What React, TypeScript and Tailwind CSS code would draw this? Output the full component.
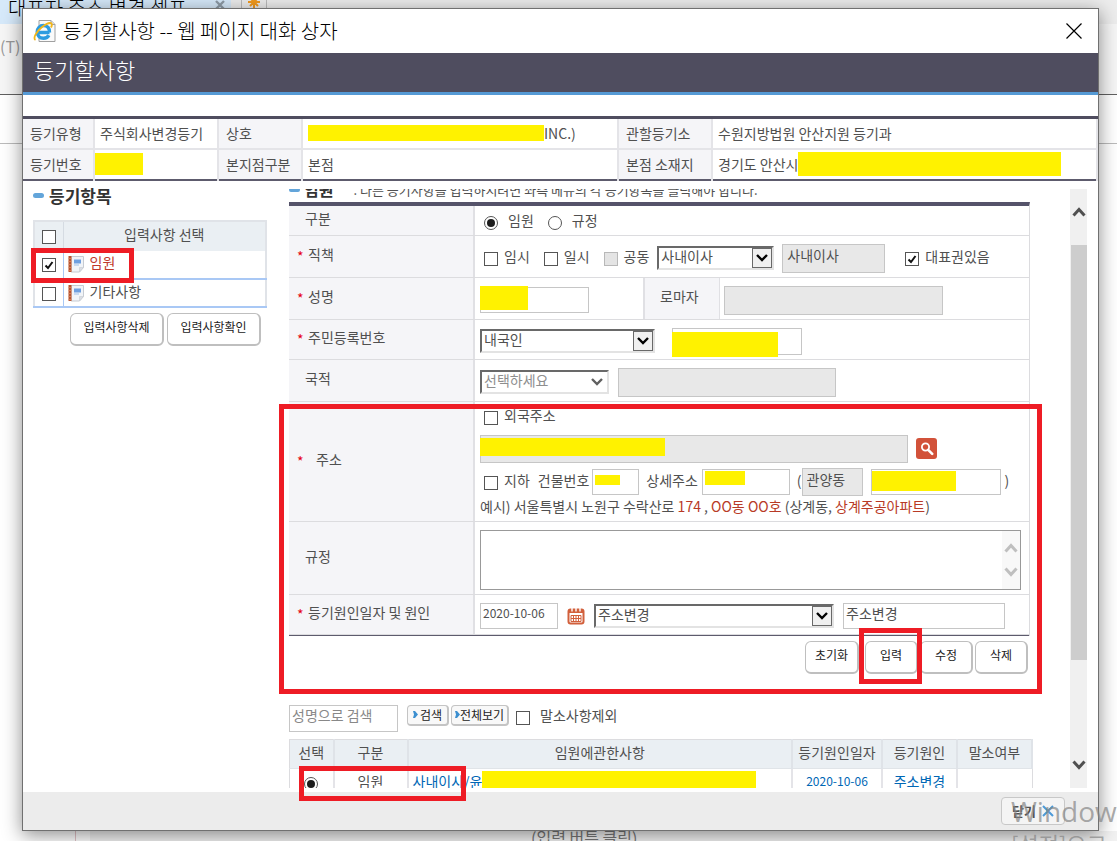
import type { ReactNode } from "react";
import clsx from "clsx";

const Mark = ({ className }: { className: string }) => (
  <span className={clsx("bg-[#fff200]", className)} />
);

const Outline = ({ className }: { className: string }) => (
  <div
    className={clsx(
      "pointer-events-none absolute border-[5px] border-[#ee1c25]",
      className
    )}
  />
);

type CheckProps = {
  id: string;
  label?: string;
  hint?: string;
  checked?: boolean;
  disabled?: boolean;
  className?: string;
};

const Check = ({ id, label, hint, checked, disabled, className }: CheckProps) => (
  <span className={clsx("flex shrink-0 items-center", className)}>
    <span className="relative mt-0.5 flex">
      <input
        id={id}
        type="checkbox"
        aria-label={label ? undefined : hint}
        defaultChecked={checked}
        disabled={disabled}
        className="peer size-3.5 appearance-none border border-[#555] bg-white disabled:border-[#b8b8b8] disabled:bg-[#e4e4e4]"
      />
      <svg
        viewBox="0 0 14 14"
        className="pointer-events-none absolute inset-0 hidden size-3.5 peer-checked:block"
      >
        <path d="M3.500 7.500 6 10l4.500-6" fill="none" stroke="#111" strokeWidth="2" />
      </svg>
    </span>
    {label && (
      <label htmlFor={id} className="ml-1.5 pb-1">
        {label}
      </label>
    )}
  </span>
);

type RadioProps = {
  id: string;
  name: string;
  label?: string;
  hint?: string;
  checked?: boolean;
  className?: string;
};

const Radio = ({ id, name, label, hint, checked, className }: RadioProps) => (
  <span className={clsx("flex items-center", className)}>
    <span className="relative mt-0.5 flex">
      <input
        id={id}
        type="radio"
        name={name}
        aria-label={label ? undefined : hint}
        defaultChecked={checked}
        className="peer size-3.5 appearance-none rounded-full border border-[#555] bg-white"
      />
      <span className="pointer-events-none absolute inset-[3px] hidden rounded-full bg-[#1c1c1c] peer-checked:block" />
    </span>
    {label && (
      <label htmlFor={id} className="ml-2.5 pb-1">
        {label}
      </label>
    )}
  </span>
);

type SelectProps = {
  id: string;
  value: string;
  label?: string;
  disabled?: boolean;
  className?: string;
};

const Select = ({ id, value, label, disabled, className }: SelectProps) => (
  <span className={clsx("relative flex h-6 shrink-0", className)}>
    <select
      id={id}
      aria-label={label}
      disabled={disabled}
      className="w-full appearance-none border-2 border-t-[#696969] border-r-[#e3e3e3] border-b-[#e3e3e3] border-l-[#696969] bg-white pb-1 pl-0.5 leading-4 disabled:text-[#8e8e8e] disabled:opacity-100"
    >
      <option>{value}</option>
    </select>
    <span
      className={clsx(
        "pointer-events-none absolute top-0.5 right-0.5 flex size-5 items-center justify-center",
        !disabled && "border border-[#696969] bg-[#f0f0f0]"
      )}
    >
      <svg viewBox="0 0 12 8" className="h-2 w-3">
        <path
          d="m1 1 5 5 5-5"
          fill="none"
          stroke={disabled ? "#606060" : "#000"}
          strokeWidth="2.400"
        />
      </svg>
    </span>
  </span>
);

type TextProps = {
  id: string;
  value?: string;
  label?: string;
  placeholder?: string;
  readOnly?: boolean;
  className?: string;
  children?: ReactNode;
};

const Text = ({
  id,
  value,
  label,
  placeholder,
  readOnly,
  className,
  children,
}: TextProps) => (
  <span className={clsx("relative flex shrink-0", className)}>
    <input
      id={id}
      type="text"
      aria-label={label}
      defaultValue={value}
      placeholder={placeholder}
      readOnly={readOnly}
      className="w-full border border-[#c6c6c6] bg-white px-0.5 pb-1.5 placeholder:text-[#888] read-only:bg-[#e8e8e8] read-only:px-1"
    />
    {children}
  </span>
);

const Button = ({ children, className }: { children: ReactNode; className: string }) => (
  <button
    type="button"
    className={clsx(
      "h-[33px] shrink-0 rounded-md border border-r-2 border-b-2 border-[#bfbfbf] bg-white pb-1 text-xs text-[#222]",
      className
    )}
  >
    {children}
  </button>
);

type RowProps = {
  label: string;
  htmlFor?: string;
  required?: boolean;
  height: string;
  labelClass?: string;
  children: ReactNode;
};

const Row = ({ label, htmlFor, required, height, labelClass, children }: RowProps) => (
  <div className={clsx("flex border-b border-[#dcdcdf]", height)}>
    <div className="flex w-[186px] shrink-0 items-center border-r-2 border-[#e0e0e4] bg-[#f5f5f8] pb-1 pl-2">
      <span
        className={clsx(
          "shrink-0 pt-1 text-[#e60012]",
          required ? "w-[11px]" : "w-2"
        )}
      >
        {required && "*"}
      </span>
      <label htmlFor={htmlFor} className={labelClass}>
        {label}
      </label>
    </div>
    <div className="flex min-w-0 flex-1 items-center pt-1 pl-[5px]">{children}</div>
  </div>
);

const BookIcon = () => (
  <svg viewBox="0 0 16 18" className="h-[18px] w-4 shrink-0">
    <path d="M3 1.500h12.500v11l-4 4.500H3z" fill="#f1f4f8" stroke="#c6cbd2" />
    <path d="M11.500 17v-4.500h4z" fill="#d9dde3" stroke="#c6cbd2" strokeWidth=".6" />
    <path d="M6 4.500h7v4H6z" fill="#6fa0e0" />
    <path d="M6 10h5" stroke="#9fc0ea" />
    <path d="M.5 1h3v16h-3z" fill="#b8532f" />
    <path d="M.5 3.500h3M.5 6.500h3M.5 9.500h3M.5 12.500h3M.5 15.500h3" stroke="#d98a62" strokeWidth=".8" />
  </svg>
);

const ExplorerIcon = () => (
  <svg viewBox="0 0 24 24" className="size-6 shrink-0">
    <path d="M6 1.500h12l4 4v17H6z" fill="#fafafa" stroke="#a0a0a0" />
    <path d="M18 1.500v4h4" fill="#ddd" stroke="#a0a0a0" />
    <path
      d="M16.500 13.500H6M16.500 13.500c.2-4.200-2-7-6-7-3.700 0-6.300 2.800-6.300 6.500s2.600 6.300 6.300 6.300c2.500 0 4.400-1 5.300-3"
      fill="none"
      stroke="#2d9be0"
      strokeWidth="3.400"
    />
    <path
      d="M2.500 21c-3-1.500 1-8.500 6-12.500 4-3.400 8.500-5.500 10-4 .8.900.3 2.500-.5 4"
      fill="none"
      stroke="#f2b619"
      strokeWidth="1.800"
    />
  </svg>
);

const Arrow = ({ up, color }: { up?: boolean; color: string }) => (
  <svg viewBox="0 0 14 10" className="h-2.5 w-3.5">
    <path
      d={up ? "m1.500 8.500 5.500-6 5.500 6" : "m1.500 1.500 5.500 6 5.500-6"}
      fill="none"
      stroke={color}
      strokeWidth="3"
    />
  </svg>
);

const BlueDot = () => (
  <svg viewBox="0 0 5 7" className="h-[7px] w-[5px] shrink-0">
    <path d="M0 0h2l3 3.500L2 7H0l1-3.500z" fill="#3c8fd0" />
  </svg>
);

const Backdrop = () => (
  <div className="absolute inset-0 -z-10 bg-white" aria-hidden="true">
    <div className="flex h-6 bg-[#ededed]">
      <div className="flex w-[231px] items-start justify-between overflow-hidden bg-[#d6e9fa] pr-1.5 pl-2 text-xl leading-4 font-light whitespace-nowrap text-black">
        대표자 주소 변경 셀프
        <svg viewBox="0 0 10 10" className="size-2.5">
          <path d="m1 1 8 8m0-8L1 9" stroke="#8d9aa6" strokeWidth="2.400" />
        </svg>
      </div>
      <div className="ml-2.5 flex w-[26px] justify-center border-x border-[#bbb]">
        <svg viewBox="0 0 12 12" className="-mt-1 size-3">
          <path
            d="M6 0v12M0 6h12M2 2l8 8M10 2l-8 8"
            stroke="#f39a1d"
            strokeWidth="2"
          />
        </svg>
      </div>
    </div>
    <div className="h-[71px] border-b border-[#606060] bg-[#f6f6f6] pt-2.5 text-base text-[#999]">
      (T)
    </div>
    <div className="h-[49px] border-b border-[#bbb]" />
    <div className="absolute bottom-0 left-[75px] h-2.5 w-4 border-x border-[#e3c4c8]" />
    <div className="absolute right-0 bottom-0 left-[90px] h-2.5 overflow-hidden bg-[#f2f2f2] pl-[441px] text-base leading-3 text-[#777]">
      (입력 버튼 클릭)
    </div>
  </div>
);

const infoLabel = "border-r-2 border-[#e4e4e8] bg-[#f5f5f8] pl-[7px] text-left font-normal";
const infoValue = "border-r-2 border-[#e4e4e8] pl-[5px]";

const InfoTable = () => (
  <table className="w-full table-fixed border-collapse border-t-[3px] border-b-2 border-t-[#4f4d5f] border-b-[#5d5b6d]">
    <colgroup>
      <col className="w-[71px]" />
      <col className="w-[124px]" />
      <col className="w-[84px]" />
      <col className="w-[316px]" />
      <col className="w-[94px]" />
      <col />
    </colgroup>
    <tbody>
      <tr className="h-[31px] border-b-2 border-[#e4e4e8]">
        <th className={infoLabel}>등기유형</th>
        <td className={infoValue}>주식회사변경등기</td>
        <th className={infoLabel}>상호</th>
        <td className={infoValue}>
          <span className="flex items-center">
            <Mark className="h-4 w-[236px]" />
            INC.)
          </span>
        </td>
        <th className={infoLabel}>관할등기소</th>
        <td className={infoValue}>수원지방법원 안산지원 등기과</td>
      </tr>
      <tr className="h-[31px]">
        <th className={infoLabel}>등기번호</th>
        <td className="border-r-2 border-[#e4e4e8]">
          <Mark className="block h-[22px] w-12" />
        </td>
        <th className={infoLabel}>본지점구분</th>
        <td className={infoValue}>본점</td>
        <th className={infoLabel}>본점 소재지</th>
        <td className={infoValue}>
          <span className="flex items-center">
            경기도 안산시
            <Mark className="h-6 w-[263px]" />
          </span>
        </td>
      </tr>
    </tbody>
  </table>
);

const items = [
  { id: "item-officer", name: "임원", checked: true },
  { id: "item-etc", name: "기타사항", checked: false },
];

const SideList = () => (
  <aside className="w-[266px] shrink-0 pt-[5px] pl-2.5">
    <h2 className="flex items-center gap-[5px] text-[17px] leading-5 font-bold text-[#333]">
      <span className="h-[5px] w-[11px] rounded-sm bg-[#63a5da]" />
      등기항목
    </h2>
    <table className="mt-3.5 w-[234px] border-collapse border-2 border-[#e0e3e8]">
      <thead>
        <tr className="h-[30px] bg-[#eaeff3]">
          <th className="w-[29px] border-r border-[#d5dbe2] pl-[7px]">
            <Check id="item-all" hint="전체 선택" />
          </th>
          <th className="pb-1 font-normal">입력사항 선택</th>
        </tr>
      </thead>
      <tbody>
        {items.map((item) => (
          <tr key={item.id} className="h-7">
            <td className="border-r border-b-2 border-[#a9c8f5] pl-[7px]">
              <Check id={item.id} hint={item.name} checked={item.checked} />
            </td>
            <td className="border-b-2 border-[#a9c8f5]">
              <label
                htmlFor={item.id}
                className={clsx(
                  "flex items-center gap-1.5 pl-1",
                  item.checked && "text-[#c0392b]"
                )}
              >
                <BookIcon />
                <span className="pb-1">{item.name}</span>
              </label>
            </td>
          </tr>
        ))}
      </tbody>
    </table>
    <div className="mt-[5px] flex gap-[3px] pl-[37px]">
      <Button className="w-[94px]">입력사항삭제</Button>
      <Button className="w-[94px]">입력사항확인</Button>
    </div>
  </aside>
);

const OfficerForm = () => (
  <form className="mr-[3px]">
    <div className="border-t-4 border-r border-t-[#55536a] border-r-[#dcdcdf]">
      <Row label="구분" height="h-[30px]">
        <Radio id="kind-officer" name="kind" label="임원" checked className="ml-1" />
        <Radio id="kind-rule" name="kind" label="규정" className="ml-3.5" />
      </Row>
      <Row label="직책" htmlFor="position" required height="h-[42px]">
        <Check id="temporary" label="임시" className="ml-1" />
        <Check id="oneday" label="일시" className="ml-3.5" />
        <Check id="joint" label="공동" disabled className="ml-3.5" />
        <Select id="position" value="사내이사" className="ml-2 w-[117px]" />
        <Text
          id="position-name"
          label="직책명"
          value="사내이사"
          readOnly
          className="ml-2 h-[29px] w-[103px]"
        />
        <Check id="represent" label="대표권있음" checked className="ml-5" />
      </Row>
      <Row label="성명" htmlFor="name" required height="h-[42px]">
        <Text id="name" className="h-[26px] w-[109px]">
          <Mark className="absolute -top-px left-0 h-6 w-12" />
        </Text>
        <label
          htmlFor="roman"
          className="-mt-1 ml-[54px] flex h-[41px] w-[77px] items-center border-r border-l-2 border-[#e0e0e4] bg-[#f5f5f8] pb-1 pl-[15px]"
        >
          로마자
        </label>
        <Text id="roman" readOnly className="ml-1 h-[29px] w-[219px]" />
      </Row>
      <Row label="주민등록번호" htmlFor="nation-type" required height="h-10">
        <Select id="nation-type" value="내국인" className="w-[175px]" />
        <Text id="regno" label="주민등록번호" className="ml-[17px] h-[27px] w-[130px]">
          <Mark className="absolute top-1 left-0 h-[25px] w-[106px]" />
        </Text>
      </Row>
      <Row label="국적" htmlFor="nation" height="h-[42px]">
        <Select id="nation" value="선택하세요" disabled className="w-[129px]" />
        <Text
          id="nation-name"
          label="국적명"
          readOnly
          className="ml-[9px] h-[29px] w-[218px]"
        />
      </Row>
      <Row
        label="주소"
        htmlFor="address"
        required
        height="h-[120px]"
        labelClass="pl-2"
      >
        <div className="flex min-w-0 flex-1 flex-col pb-1.5">
          <Check id="foreign" label="외국주소" className="ml-1 h-6" />
          <div className="mt-1.5 flex items-center">
            <Text id="address" readOnly className="mr-2 h-7 w-[428px]">
              <Mark className="absolute top-[3px] left-0 h-[18px] w-[185px]" />
            </Text>
            <button
              type="button"
              aria-label="주소 검색"
              className="flex size-[21px] items-center justify-center rounded-[3px] bg-[#d2523a]"
            >
              <svg viewBox="0 0 14 14" className="size-3.5">
                <circle cx="5.500" cy="5" r="3.600" fill="none" stroke="#fff" strokeWidth="1.800" />
                <path d="m8.200 7.800 4 4" stroke="#fff" strokeWidth="2.600" strokeLinecap="round" />
              </svg>
            </button>
          </div>
          <div className="mt-[5px] flex h-7 items-center whitespace-nowrap">
            <Check id="basement" label="지하" className="ml-1" />
            <label htmlFor="building" className="ml-2 pb-1">
              건물번호
            </label>
            <Text id="building" className="ml-[3px] h-[26px] w-[47px]">
              <Mark className="absolute top-1.5 left-[3px] h-2.5 w-[25px]" />
            </Text>
            <label htmlFor="detail" className="ml-[7px] pb-1">
              상세주소
            </label>
            <Text id="detail" className="ml-1 h-[26px] w-[88px]">
              <Mark className="absolute top-0.5 left-[3px] h-3.5 w-10" />
            </Text>
            <span className="ml-[7px] pb-1">(</span>
            <Text
              id="dong"
              label="동"
              value="관양동"
              readOnly
              className="h-7 w-[61px]"
            />
            <Text id="complex" label="공동주택명" className="ml-2 h-[26px] w-[130px]">
              <Mark className="absolute top-0.5 left-px h-5 w-[84px]" />
            </Text>
            <span className="ml-1 pb-1">)</span>
          </div>
          <p className="whitespace-nowrap">
            예시) 서울특별시 노원구 수락산로{" "}
            <span className="text-[#b83a26]">174</span> ,{" "}
            <span className="text-[#b83a26]">OO동 OO호</span> (상계동,{" "}
            <span className="text-[#b83a26]">상계주공아파트</span>)
          </p>
        </div>
      </Row>
      <Row label="규정" htmlFor="rule" height="h-[73px]">
        <div className="relative mr-2 h-[60px] flex-1">
          <textarea
            id="rule"
            className="block h-full w-full resize-none border border-[#999] bg-white"
          />
          <div className="absolute inset-y-px right-px flex w-[18px] flex-col items-center justify-center gap-3.5 bg-[#f8f8f8]">
            <Arrow up color="#bfbfbf" />
            <Arrow color="#bfbfbf" />
          </div>
        </div>
      </Row>
      <div className="border-b border-[#5d5b6d]">
        <Row label="등기원인일자 및 원인" htmlFor="cause-date" required height="h-10">
          <Text
            id="cause-date"
            value="2020-10-06"
            className="h-[26px] w-[78px] text-xs"
          />
          <button type="button" aria-label="날짜 선택" className="ml-[9px]">
            <svg viewBox="0 0 18 18" className="size-[18px]">
              <rect x="1.500" y="2.500" width="15" height="14" rx="2" fill="#fff" stroke="#d2603c" strokeWidth="2" />
              <path d="M2 4.500h14" stroke="#d2603c" strokeWidth="3" />
              <path d="M5 .5v4M9 .5v4M13 .5v4" stroke="#fff" strokeWidth="1.400" />
              <path d="M4 8.500h10v6H4zM6.500 8.500v6M9 8.500v6M11.500 8.500v6M4 11.500h10" fill="none" stroke="#d2603c" strokeWidth="1" />
            </svg>
          </button>
          <Select
            id="cause"
            label="등기원인"
            value="주소변경"
            className="ml-[9px] w-60"
          />
          <Text
            id="cause-name"
            label="원인"
            value="주소변경"
            className="ml-[9px] h-[26px] w-[162px]"
          />
        </Row>
      </div>
    </div>
    <div className="mt-[5px] flex justify-end gap-0.5 pr-0.5">
      <Button className="mr-1 w-[54px]">초기화</Button>
      <Button className="w-[53px]">입력</Button>
      <Button className="w-[53px]">수정</Button>
      <Button className="w-[53px]">삭제</Button>
    </div>
  </form>
);

const smallButton =
  "flex h-[21px] items-center justify-center rounded-sm border border-r-2 border-b-2 border-[#c4c4c4] bg-[#f8f8f8] text-xs text-[#222]";

const SearchBar = () => (
  <div className="mt-[31px] flex items-start">
    <Text
      id="search"
      label="성명으로 검색"
      placeholder="성명으로 검색"
      className="h-[27px] w-[109px]"
    />
    <button type="button" className={clsx(smallButton, "ml-[9px] w-[42px] gap-0.5")}>
      <BlueDot />
      검색
    </button>
    <button type="button" className={clsx(smallButton, "ml-0.5 w-[58px]")}>
      <BlueDot />
      전체보기
    </button>
    <Check id="exclude" hint="말소사항제외" className="ml-[7px] h-6" />
    <label htmlFor="exclude" className="ml-2.5">
      말소사항제외
    </label>
  </div>
);

const headCell = "border-r-2 border-[#dfe3e8] pb-1 font-normal";
const bodyCell = "border-r-2 border-[#e4e4e8] pb-1 text-center whitespace-nowrap";

const OfficerTable = () => (
  <table className="mt-[7px] w-full table-fixed border-collapse border border-[#dcdcdf]">
    <colgroup>
      <col className="w-11" />
      <col className="w-[74px]" />
      <col />
      <col className="w-[90px]" />
      <col className="w-[75px]" />
      <col className="w-[75px]" />
    </colgroup>
    <thead>
      <tr className="h-[29px] border-b border-[#e0e4e8] bg-[#eaeff3]">
        <th className={headCell}>선택</th>
        <th className={headCell}>구분</th>
        <th className={headCell}>임원에관한사항</th>
        <th className={headCell}>등기원인일자</th>
        <th className={headCell}>등기원인</th>
        <th className={headCell}>말소여부</th>
      </tr>
    </thead>
    <tbody>
      <tr className="h-[29px]">
        <td className="border-r-2 border-[#e4e4e8]">
          <Radio
            id="row-1"
            name="officer"
            hint="임원 선택"
            checked
            className="justify-center"
          />
        </td>
        <td className={bodyCell}>임원</td>
        <td className={bodyCell}>
          <a href="#officer" className="flex items-center pl-1 text-[#0067b5]">
            사내이사/윤
            <Mark className="h-[19px] w-[274px]" />
          </a>
        </td>
        <td className={clsx(bodyCell, "text-xs text-[#0067b5]")}>2020-10-06</td>
        <td className={clsx(bodyCell, "text-[#0067b5]")}>주소변경</td>
        <td />
      </tr>
    </tbody>
  </table>
);

export default function App() {
  return (
    <div
      className="relative isolate flex h-screen overflow-hidden pt-2 pr-[18px] pb-2.5 pl-[22px] text-sm leading-5 text-[#505050]"
      style={{ fontFamily: '"Noto Sans CJK KR", "Liberation Sans", sans-serif' }}
    >
      <Backdrop />
      <div
        role="dialog"
        aria-labelledby="dialog-title"
        className="relative flex min-w-0 flex-1 flex-col border border-[#707070] bg-white shadow-[0_4px_18px_rgba(0,0,0,0.45)]"
      >
        <div className="flex h-11 shrink-0 items-center gap-1.5 pr-4 pl-2.5 text-xl font-light text-black">
          <ExplorerIcon />
          <span id="dialog-title">등기할사항 -- 웹 페이지 대화 상자</span>
          <button type="button" aria-label="창 닫기" className="ml-auto">
            <svg viewBox="0 0 16 16" className="size-4">
              <path d="m.5.5 15 15m0-15-15 15" stroke="#000" strokeWidth="1.200" />
            </svg>
          </button>
        </div>
        <h1 className="h-[42px] shrink-0 border-b-[3px] border-[#559ad5] bg-[#4f4d5f] pt-1 pl-[11px] text-[22px] leading-6 font-light text-white">
          등기할사항
        </h1>
        <div className="mt-[21px] shrink-0">
          <InfoTable />
        </div>

        <div className="flex min-h-0 flex-1">
          <SideList />
          <main className="mt-2 mb-1 min-w-0 flex-1 overflow-hidden pr-[37px]">
            <div className="-mt-2 flex h-[21px] items-start gap-1 whitespace-nowrap">
              <span className="mt-[7px] h-1 w-[11px] rounded-sm bg-[#63a5da]" />
              <strong className="text-base leading-4 text-[#333]">임원</strong>
              <span className="ml-4 text-[13px] leading-[18px]">
                . 다른 등기사항을 입력하시려면 좌측 메뉴의 각 등기항목을 클릭해야 합니다.
              </span>
            </div>
            <OfficerForm />
            <SearchBar />
            <OfficerTable />
          </main>
          <div
            aria-hidden="true"
            className="mt-2 mr-[11px] mb-1 flex w-[17px] flex-col items-center bg-[#f0f0f0] py-[18px]"
          >
            <Arrow up color="#505050" />
            <div className="mt-7 h-[415px] w-4 bg-[#cdcdcd]" />
            <div className="mt-auto">
              <Arrow color="#505050" />
            </div>
          </div>
        </div>

        <footer className="flex h-[38px] shrink-0 items-center justify-end bg-[#ececec] pr-[33px]">
          <button
            type="button"
            className="flex h-7 w-16 items-center justify-center gap-1.5 rounded border border-[#c8c8c8] bg-[#f4f4f4] text-[13px] font-bold"
          >
            닫기
            <svg viewBox="0 0 12 12" className="size-3">
              <path d="m1 1 10 10m0-10L1 11" stroke="#4d9ad8" strokeWidth="2" />
            </svg>
          </button>
        </footer>

        <Outline className="top-[239px] left-2 h-[35px] w-[103px]" />
        <Outline className="top-[395px] right-14 left-64 h-[290px]" />
        <Outline className="top-[619px] right-44 h-14 w-[63px]" />
        <Outline className="top-[757px] left-[276px] h-[35px] w-[167px]" />
      </div>

      <div className="pointer-events-none absolute right-0 bottom-0 h-[46px] w-[106px] overflow-hidden whitespace-nowrap text-[#858585]/70">
        <p className="font-['Open_Sans'] text-[28px] leading-8">Windows</p>
        <p className="text-[22px] leading-8">[설정]으로</p>
      </div>
    </div>
  );
}
